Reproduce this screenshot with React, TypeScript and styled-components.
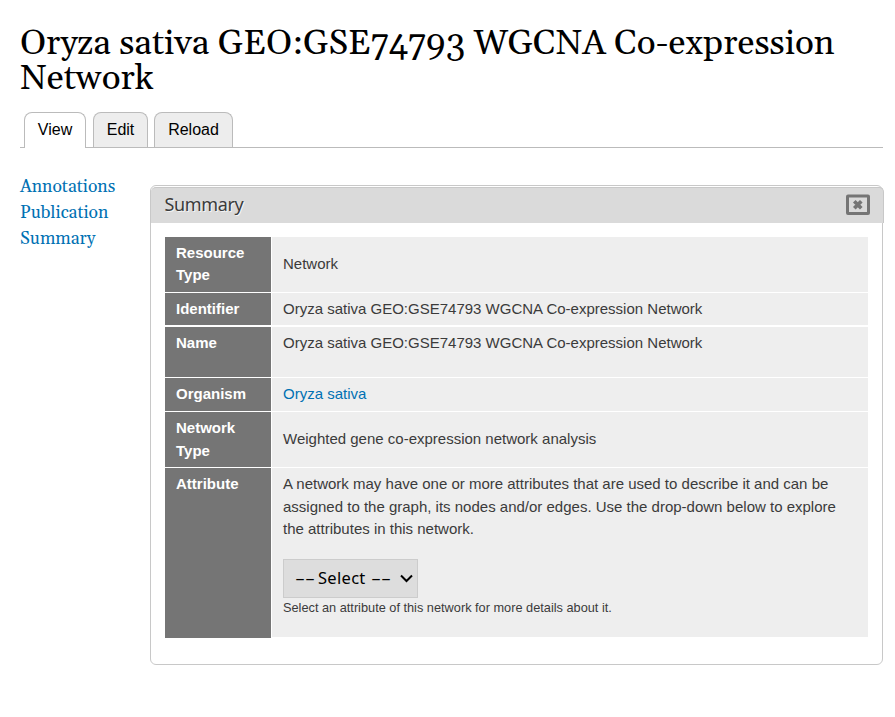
import React from "react";
import styled, { createGlobalStyle } from "styled-components";

const Global = createGlobalStyle`
  * { box-sizing: border-box; }
  body { margin: 0; background: #fff; color: #3b3b3b; font-family: "Liberation Sans", Arial, sans-serif; font-size: 15px; line-height: 22.5px; }
`;

const Page = styled.main`
  padding: 27px 12px 0 20px;
`;
const Title = styled.h1`
  margin: 0;
  height: 85px;
  font: 400 35px/35px Georgia, Gelasio, "Liberation Serif", serif;
  color: #000;
`;
const Tabs = styled.nav`
  display: flex;
  height: 36px;
  padding-left: 4px;
  gap: 6px;
  border-bottom: 1px solid #bbb;
`;
const Tab = styled.a<{ $w: number; $active?: boolean }>`
  width: ${(p) => p.$w}px;
  height: ${(p) => (p.$active ? 36 : 35)}px;
  margin-right: ${(p) => (p.$active ? 1 : 0)}px;
  border: 1px solid #bbb;
  border-bottom: 0;
  border-radius: 8px 8px 0 0;
  background: ${(p) => (p.$active ? "#fff" : "#ededed")};
  color: #000;
  font-size: 16px;
  line-height: 33px;
  text-align: center;
`;
const Columns = styled.div`
  display: grid;
  grid-template-columns: 130px 733px;
`;
const Sidebar = styled.nav`
  display: flex;
  flex-direction: column;
  padding-top: 26px;
  font: 17.5px/26px Georgia, Gelasio, "Liberation Serif", serif;
`;
const Link = styled.a`
  color: #0071b3;
`;
const Panel = styled.section`
  margin-top: 37px;
  height: 480px;
  border: 1px solid #c8c8c8;
  border-radius: 6px;
`;
const PanelHeader = styled.header`
  display: flex;
  align-items: flex-start;
  justify-content: space-between;
  height: 36px;
  margin: 1px -2px 14px 0;
  padding: 0 13px 0 13.5px;
  border: solid #c8c8c8;
  border-width: 1px 1px 0 0;
  border-radius: 5px 5px 0 0;
  background: #dadada;
`;
const PanelTitle = styled.h2`
  margin: 0;
  font: 400 18px/32px "Lucida Grande", "Lucida Sans Unicode", "Noto Sans", sans-serif;
  letter-spacing: -0.35px;
  color: #3b3b3b;
  text-shadow: 1px 1px 0 #f4f4f4;
`;
const CloseIcon = styled.svg`
  margin-top: 6px;
`;
const Table = styled.div`
  width: 703px;
  margin-left: 14px;
`;
const Row = styled.div<{ $h: number; $gap?: number }>`
  display: grid;
  grid-template-columns: 106px 596px;
  column-gap: 1px;
  height: ${(p) => p.$h}px;
  margin-bottom: ${(p) => p.$gap ?? 1}px;
`;
const Label = styled.div<{ $tight?: boolean }>`
  padding: 5px 11px 0;
  line-height: ${(p) => (p.$tight ? 22 : 22.5)}px;
  background: #757575;
  color: #fff;
  font-weight: 700;
`;
const Value = styled.div<{ $pad?: number; $short?: boolean }>`
  padding: ${(p) => p.$pad ?? 5}px 11px 0;
  margin-bottom: ${(p) => (p.$short ? 1 : 0)}px;
  background: #eee;
`;
const SelectBox = styled.button`
  display: flex;
  align-items: center;
  width: 135px;
  height: 39px;
  margin-top: 18px;
  padding: 0 4px 0 11px;
  border: 1px solid #ccc;
  background: #ddd;
  color: #000;
  font: 16.5px/35px "Lucida Grande", "Lucida Sans Unicode", "Noto Sans", sans-serif;
  text-align: left;
`;
const Dashes = styled.span`
  width: 18px;
  flex: none;
  font-size: 16px;
  transform: scaleX(1.95);
  transform-origin: left;
`;
const SelectText = styled.span`
  width: 53px;
  margin-left: 5px;
  height: 37px;
  letter-spacing: 0.3px;
`;
const Chevron = styled.svg`
  flex: none;
  margin-left: auto;
`;
const Help = styled.div`
  font-size: 12.75px;
  line-height: 20px;
`;

const network = "Oryza sativa GEO:GSE74793 WGCNA Co-expression Network";

export default function App() {
  return (
    <Page>
      <Global />
      <Title>{network}</Title>
      <Tabs>
        <Tab $w={62} $active>View</Tab>
        <Tab $w={55}>Edit</Tab>
        <Tab $w={79}>Reload</Tab>
      </Tabs>
      <Columns>
        <Sidebar>
          <Link>Annotations</Link>
          <Link>Publication</Link>
          <Link>Summary</Link>
        </Sidebar>
        <Panel>
          <PanelHeader>
            <PanelTitle>Summary</PanelTitle>
            <CloseIcon width="24" height="21" viewBox="0 0 24 21" fill="none" stroke="#757575">
              <rect x="1.5" y="2" width="21" height="17.5" rx="0.5" strokeWidth="3" />
              <path d="M8.3 7.2l7 7M15.3 7.2l-7 7" strokeWidth="3.7" />
            </CloseIcon>
          </PanelHeader>
          <Table>
            <Row $h={55}><Label $tight>Resource Type</Label><Value $pad={16}>Network</Value></Row>
            <Row $h={32} $gap={2}><Label>Identifier</Label><Value>{network}</Value></Row>
            <Row $h={50}><Label>Name</Label><Value>{network}</Value></Row>
            <Row $h={33}><Label>Organism</Label><Value><Link>Oryza sativa</Link></Value></Row>
            <Row $h={55}><Label>Network Type</Label><Value $pad={16}>Weighted gene co-expression network analysis</Value></Row>
            <Row $h={170}>
              <Label>Attribute</Label>
              <Value $short>
                A network may have one or more attributes that are used to describe it and can be assigned to the graph, its nodes and/or edges. Use the drop-down below to explore the attributes in this network.
                <SelectBox>
                  <Dashes>--</Dashes>
                  <SelectText>Select</SelectText>
                  <Dashes>--</Dashes>
                  <Chevron width="13" height="9" viewBox="0 0 13 9" fill="none" stroke="#000" strokeWidth="2">
                    <path d="M1 1.5l5.5 5.5L12 1.5" />
                  </Chevron>
                </SelectBox>
                <Help>Select an attribute of this network for more details about it.</Help>
              </Value>
            </Row>
          </Table>
        </Panel>
      </Columns>
    </Page>
  );
}
